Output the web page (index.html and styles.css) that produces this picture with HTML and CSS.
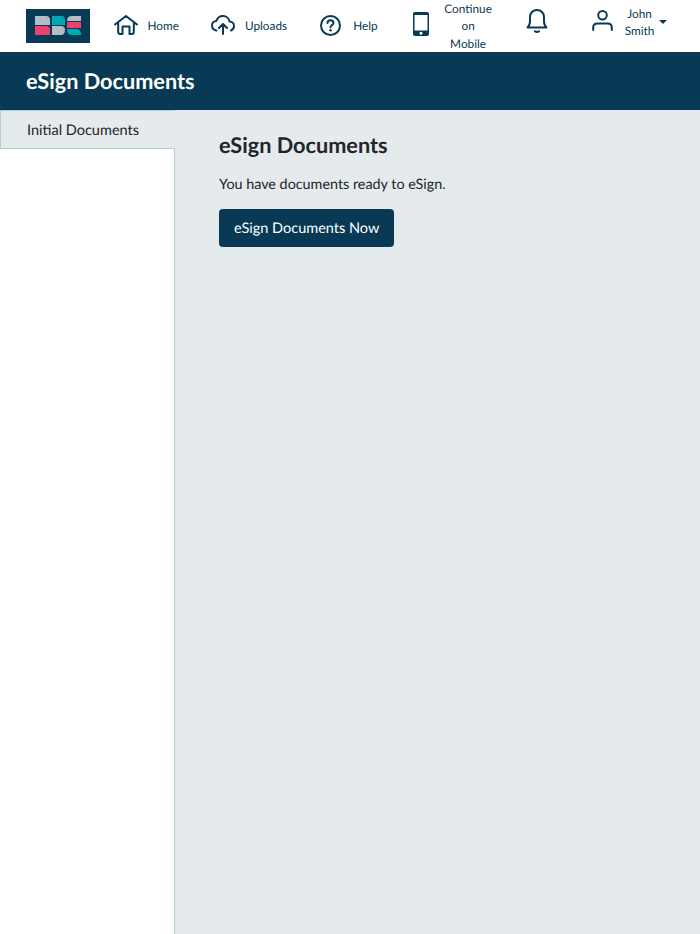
FILE: index.html
```html
<!DOCTYPE html>
<html lang="en">
<head>
    <meta charset="UTF-8">
    <meta name="viewport" content="width=device-width, initial-scale=1.0">
    <title>eSign Documents</title>
    <link rel="stylesheet" href="styles.css">
</head>
<body>
    <header class="topnav">
        <a class="logo" href="#">
            <svg width="46" height="19" viewBox="0 0 46 19">
                <path fill="#b4bcc6" d="M0 0H11Q15 0 15 4V9H0Z"/>
                <path fill="#ee3f6f" d="M0 10H11Q15 10 15 14V19H0Z"/>
                <path fill="#00a7b5" d="M17 0H27Q30 0 30 4V9H17Z"/>
                <path fill="#b4bcc6" d="M17 10H26Q30 10 30 14Q30 19 26 19H17Z"/>
                <path fill="#b4bcc6" d="M32 5Q32 0 37 0H46V5H32Z"/>
                <path fill="#ee3f6f" d="M32 6H46V12H32Z"/>
                <path fill="#00a7b5" d="M32 13H42Q46 13 46 19H37Q32 19 32 13Z"/>
            </svg>
        </a>
        <nav class="nav-items">
            <a class="nav-item nav-home" href="#">
                <svg class="icon" width="24" height="20" viewBox="0 0 24 20">
                    <path d="M1 9.500 12 1 23 9.500M4.200 8V17Q4.200 19 6.200 19H8.500V11.500H15.500V19H17.800Q19.800 19 19.800 17V8"/>
                </svg>
                <span>Home</span>
            </a>
            <a class="nav-item nav-uploads" href="#">
                <svg class="icon" width="24" height="20" viewBox="0 0 24 20">
                    <path d="M5.500 15.500C3 15 1 13 1 10.500 1 8 3 6 5.300 6 6.300 3 9 1 12 1 15.500 1 18 3.500 18.500 6.500 21 6.500 23 8.500 23 11 23 13 21.800 14.800 20 15.500M12 19V9M8 13 12 9 16 13"/>
                </svg>
                <span>Uploads</span>
            </a>
            <a class="nav-item nav-help" href="#">
                <svg class="icon" width="21" height="21" viewBox="0 0 21 21">
                    <circle cx="10.500" cy="10.500" r="9.500"/>
                    <path d="M7.500 8C7.500 6.300 8.800 5.300 10.500 5.300 12.200 5.300 13.500 6.300 13.500 7.900 13.500 10 10.500 10 10.500 12.300"/>
                    <circle class="dot" cx="10.500" cy="15.200" r="1.200"/>
                </svg>
                <span>Help</span>
            </a>
            <a class="nav-item nav-mobile" href="#">
                <svg width="16" height="24" viewBox="0 0 16 24">
                    <path fill="#083a55" fill-rule="evenodd" d="M2 0H14Q16 0 16 2V22Q16 24 14 24H2Q0 24 0 22V2Q0 0 2 0ZM1.500 3V18.500H14.500V3ZM8 19.700A1.500 1.500 0 1 0 8 22.700 1.500 1.500 0 1 0 8 19.700Z"/>
                </svg>
                <span class="mobile-label">Continue on Mobile</span>
            </a>
            <a class="nav-item nav-bell" href="#">
                <svg class="icon" width="22" height="24" viewBox="0 0 22 24">
                    <path d="M1.500 18.500C3.500 17 4 15 4 12V8C4 4 7 1 11 1 15 1 18 4 18 8V12C18 15 18.500 17 20.500 18.500ZM9 22.300Q11 23.500 13 22.300"/>
                </svg>
            </a>
            <a class="nav-item nav-user" href="#">
                <svg class="icon" width="21" height="21" viewBox="0 0 21 21">
                    <circle cx="10.500" cy="5.300" r="4.300"/>
                    <path d="M1.200 20V17.500C1.200 15 3 13.500 5.500 13.500H15.500C18 13.500 19.800 15 19.800 17.500V20"/>
                </svg>
                <span class="user-name">John Smith</span>
                <span class="caret"></span>
            </a>
        </nav>
    </header>

    <div class="title-bar">
        <h1>eSign Documents</h1>
    </div>

    <div class="layout">
        <aside class="sidebar">
            <a class="side-tab" href="#">Initial Documents</a>
        </aside>
        <main class="content">
            <h2>eSign Documents</h2>
            <p>You have documents ready to eSign.</p>
            <button type="button">eSign Documents Now</button>
        </main>
    </div>
</body>
</html>
```

FILE: styles.css
```css
* {
    box-sizing: border-box;
}
html, body {
    height: 100%;
}
body {
    margin: 0;
    display: flex;
    flex-direction: column;
    height: 934px;
    overflow: hidden;
    font-family: Lato, "Open Sans", sans-serif;
    text-rendering: geometricPrecision;
    color: #212529;
    background: white;
}
a {
    text-decoration: none;
    color: inherit;
}
.topnav {
    display: flex;
    align-items: center;
    height: 52px;
    padding-left: 26px;
    background: white;
}
.logo {
    display: flex;
    align-items: center;
    justify-content: center;
    width: 64px;
    height: 34px;
    margin-bottom: 1px;
    background: #083a55;
}
.nav-items {
    display: flex;
    align-items: center;
    margin-left: 24px;
}
.nav-item {
    display: flex;
    align-items: center;
    font-size: 11.800px;
    line-height: 17.400px;
    color: #083a55;
}
.nav-item svg {
    margin-top: -2px;
}
.icon {
    fill: none;
    stroke: #083a55;
    stroke-width: 2;
    stroke-linecap: round;
    stroke-linejoin: round;
}
.icon .dot {
    fill: #083a55;
    stroke: none;
}
.nav-home {
    gap: 9.500px;
}
.nav-uploads {
    gap: 10px;
    margin-left: 32px;
}
.nav-help {
    gap: 12px;
    margin-left: 33px;
}
.nav-mobile {
    gap: 14.500px;
    margin-left: 35px;
}
.nav-mobile svg {
    margin-top: -4px;
}
.mobile-label {
    width: 50px;
    text-align: center;
}
.nav-bell {
    margin-left: 32.500px;
    margin-top: -10px;
}
.nav-bell svg {
    margin-top: 0;
}
.nav-user {
    margin-left: 44px;
    margin-top: -8px;
}
.nav-user svg {
    margin-top: -3px;
}
.user-name {
    width: 32px;
    margin-left: 11px;
    text-align: center;
}
.caret {
    width: 0;
    height: 0;
    margin-left: 3px;
    border-top: 4.500px solid #083a55;
    border-left: 4.500px solid transparent;
    border-right: 4.500px solid transparent;
}
.title-bar {
    display: flex;
    align-items: center;
    height: 58px;
    padding-left: 26px;
    background: #083a55;
    color: white;
}
h1 {
    margin: 0;
    font-size: 21.700px;
    font-weight: 700;
}
.layout {
    display: flex;
    flex: 1;
    background: #e5eaed;
}
.sidebar {
    width: 175px;
    background: white;
    border-right: 1px solid #b9cdd6;
}
.side-tab {
    display: block;
    width: 175px;
    height: 39px;
    padding-left: 26px;
    line-height: 39px;
    font-size: 14.500px;
    background: #e5eaed;
    border: 1px solid #b9cdd6;
    border-right: none;
}
.content {
    flex: 1;
    padding: 21px 0 0 44px;
}
h2 {
    margin: 0 0 14px;
    font-size: 21.700px;
    line-height: 29px;
    font-weight: 700;
}
.content p {
    margin: 0 0 13px;
    font-size: 14.350px;
    line-height: 22px;
}
button {
    display: block;
    height: 38px;
    padding: 0 15px;
    font-family: inherit;
    font-size: 14.500px;
    text-rendering: geometricPrecision;
    color: white;
    background: #083a55;
    border: none;
    border-radius: 4px;
    cursor: pointer;
}
```
